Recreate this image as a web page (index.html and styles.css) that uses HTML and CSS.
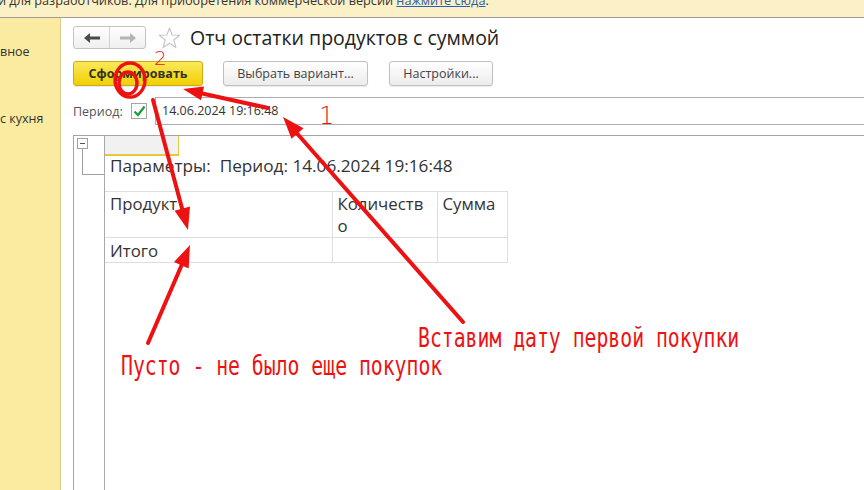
FILE: index.html
```html
<!DOCTYPE html>
<html lang="ru">
<head>
<meta charset="utf-8">
<title>Отч остатки продуктов с суммой</title>
<link rel="stylesheet" href="styles.css">
</head>
<body>
<div class="banner"><span class="banner-text">и для разработчиков. Для приобретения коммерческой версии <a href="#" class="banner-link">нажмите сюда</a>.</span></div>
<div class="app">
  <aside class="sidebar">
    <div class="side-item side-item-1">вное</div>
    <div class="side-item side-item-2">с кухня</div>
  </aside>
  <main class="main">
    <div class="head-row">
      <div class="nav">
        <button class="nav-btn nav-back"><svg width="16" height="10" viewBox="0 0 16 10"><path d="M0 5 L6 0 L6 3.5 L16 3.5 L16 6.5 L6 6.5 L6 10 Z" fill="#4a4a4a"/></svg></button>
        <button class="nav-btn nav-fwd"><svg width="16" height="10" viewBox="0 0 16 10"><path d="M16 5 L10 0 L10 3.5 L0 3.5 L0 6.5 L10 6.5 L10 10 Z" fill="#b4b4b4"/></svg></button>
      </div>
      <svg class="star" width="23" height="22" viewBox="0 0 23 22"><path d="M11.5 1 L14.2 8 L21.7 8.3 L15.8 13 L17.9 20.5 L11.5 16.3 L5.1 20.5 L7.2 13 L1.3 8.3 L8.8 8 Z" fill="none" stroke="#c4c4c4" stroke-width="1.1" stroke-linejoin="round"/></svg>
      <h1 class="title">Отч остатки продуктов с суммой</h1>
    </div>
    <div class="btn-row">
      <button class="btn btn-primary">Сформировать</button>
      <button class="btn">Выбрать вариант...</button>
      <button class="btn">Настройки...</button>
    </div>
    <div class="period-row">
      <span class="period-label">Период:</span>
      <span class="checkbox"><svg width="13" height="12" viewBox="0 0 13 12"><path d="M1.5 6.5 L5 10 L11.5 1.5" fill="none" stroke="#1f9a3c" stroke-width="2.2"/></svg></span>
      <div class="input">14.06.2024 19:16:48</div>
    </div>
    <div class="sheet">
      <div class="gutter">
        <div class="tree-box"></div>
        <div class="tree-line"></div>
      </div>
      <div class="sheet-body">
        <div class="cur-cell"></div>
        <div class="params">Параметры:&nbsp; Период: 14.06.2024 19:16:48</div>
        <table class="report">
          <colgroup><col class="c1"><col class="c2"><col class="c3"></colgroup>
          <tr class="hdr"><td>Продукт</td><td class="wrap">Количество</td><td>Сумма</td></tr>
          <tr class="row"><td>Итого</td><td></td><td></td></tr>
        </table>
      </div>
    </div>
  </main>
</div>
<div class="overlay">
  <svg class="marks" width="864" height="490" viewBox="0 0 864 490">
    <g stroke="#ee1111" stroke-width="4" stroke-linecap="round" fill="none">
      <line x1="268" y1="108" x2="200" y2="93"/>
      <line x1="463" y1="322" x2="294" y2="130"/>
      <line x1="153" y1="100" x2="183" y2="212"/>
      <line x1="148" y1="343" x2="183" y2="262"/>
      <ellipse cx="130" cy="80" rx="15" ry="17" stroke-width="3.4"/>
      <ellipse cx="128" cy="83" rx="9" ry="11" stroke-width="3.4"/>
    </g>
    <g fill="#ee1111">
      <polygon points="183,89 201,100.2 204,86.6"/>
      <polygon points="283,117 291.5,138.8 303.5,128.2"/>
      <polygon points="188,230 190,206.6 174.6,210.8"/>
      <polygon points="190,245 188.7,268.4 174,262"/>
    </g>
  </svg>
  <span class="note num-2">2</span>
  <span class="note num-1">1</span>
  <span class="note note-a">Вставим дату первой покупки</span>
  <span class="note note-b">Пусто - не было еще покупок</span>
</div>
</body>
</html>
```

FILE: styles.css
```css
* { box-sizing: border-box; }
html, body { margin: 0; padding: 0; }
body {
  width: 864px;
  height: 490px;
  overflow: hidden;
  position: relative;
  background: #fff;
  font-family: "Open Sans", "Noto Sans", sans-serif;
  color: #333;
}
.banner {
  height: 18px;
  background: #fcf0c6;
  border-bottom: 1px solid #9c9c9c;
  overflow: hidden;
  white-space: nowrap;
}
.banner-text {
  display: block;
  font-size: 12.7px;
  line-height: 18px;
  margin-top: -9px;
  margin-left: -2px;
  color: #333;
}
.banner-link { color: #2b5db0; text-decoration: underline; }
.app {
  display: flex;
  height: 472px;
}
.sidebar {
  width: 61px;
  flex: none;
  background: #fbeba0;
  border-right: 1px solid #d9cd8c;
  font-size: 12.5px;
  color: #333;
  padding-top: 25px;
}
.side-item { line-height: 18px; white-space: nowrap; }
.side-item-2 { margin-top: 49px; }
.main {
  flex: 1;
  min-width: 0;
  padding: 8px 0 0 12px;
  overflow: hidden;
}
.head-row {
  display: flex;
  align-items: center;
  height: 23px;
}
.nav {
  display: flex;
  width: 73px;
  height: 23px;
  border: 1px solid #c3c3c3;
  border-radius: 3px;
  background: linear-gradient(#ffffff, #efefef);
  overflow: hidden;
}
.nav-btn {
  flex: 1;
  border: 0;
  background: transparent;
  padding: 0;
  display: flex;
  align-items: center;
  justify-content: center;
}
.nav-back { border-right: 1px solid #d2d2d2; }
.star { margin-left: 12px; }
.title {
  margin: 0 0 0 9px;
  font-size: 19.5px;
  font-weight: normal;
  color: #222;
  white-space: nowrap;
  line-height: 23px;
}
.btn-row {
  display: flex;
  gap: 20px;
  margin-top: 12px;
}
.btn {
  height: 25px;
  padding: 0 13px;
  border: 1px solid #c0c0c0;
  border-radius: 3px;
  background: linear-gradient(#ffffff, #ececec);
  font-family: "Open Sans", "Noto Sans", sans-serif;
  font-size: 12.5px;
  color: #444;
  box-shadow: 0 1px 1px rgba(0,0,0,0.08);
}
.btn:nth-child(2) { width: 145px; }
.btn:nth-child(3) { width: 104px; margin-left: 1px; }
.btn-primary {
  width: 130px;
  background: linear-gradient(#fbe95a, #f0cf05);
  border-color: #c9ac12;
  font-weight: bold;
  color: #333318;
}
.period-row {
  display: flex;
  align-items: center;
  margin-top: 11px;
  height: 28px;
}
.period-label {
  font-size: 12.5px;
  color: #555;
  width: 58px;
}
.checkbox {
  width: 16px;
  height: 16px;
  border: 1px solid #a6a6a6;
  background: #fff;
  display: flex;
  align-items: center;
  justify-content: center;
}
.input {
  flex: 1;
  height: 28px;
  margin-left: 8px;
  margin-right: -10px;
  border: 1px solid #acacac;
  padding-left: 6px;
  font-size: 12.5px;
  line-height: 26px;
  color: #333;
}
.sheet {
  display: flex;
  margin-top: 10px;
  margin-right: -10px;
  height: 360px;
  border-top: 1px solid #a4a4a4;
  border-left: 1px solid #a4a4a4;
}
.gutter {
  width: 31px;
  flex: none;
  border-right: 1px solid #a9a9a9;
  padding-top: 2px;
}
.tree-box {
  width: 11px;
  height: 11px;
  margin-left: 3px;
  border: 1px solid #a0a0a0;
  position: relative;
}
.tree-box::after {
  content: "";
  position: absolute;
  left: 2px;
  right: 2px;
  top: 4px;
  height: 1px;
  background: #555;
}
.tree-line {
  width: 22px;
  height: 26px;
  margin-left: 8px;
  border-left: 1px solid #a0a0a0;
  border-bottom: 1px solid #a0a0a0;
}
.sheet-body { flex: 1; }
.cur-cell {
  width: 74px;
  height: 20px;
  background: #f1f1f1;
  border-right: 1px solid #e6c83a;
  border-bottom: 2px solid #e6c83a;
}
.params {
  font-size: 17.2px;
  line-height: 24px;
  padding-left: 5px;
  color: #333;
  white-space: nowrap;
  margin-bottom: 13px;
  margin-top: -2px;
}
.report {
  border-collapse: collapse;
  width: 402px;
  table-layout: fixed;
  font-size: 16.8px;
  color: #333;
}
.c1 { width: 227px; }
.c2 { width: 105px; }
.c3 { width: 70px; }
.report td {
  border: 1px solid #dedede;
  padding: 0 5px 0;
  line-height: 22px;
  vertical-align: top;
  text-align: left;
}
.report tr td:first-child { border-left: 0; }
.report .wrap { word-break: break-all; }
.hdr td { height: 46px; padding-top: 1px; }
.row td { height: 24px; padding-top: 2px; }
.overlay {
  position: absolute;
  left: 0;
  top: 0;
  width: 864px;
  height: 490px;
  pointer-events: none;
}
.marks { position: absolute; left: 0; top: 0; }
.note {
  position: absolute;
  color: #ee1111;
  white-space: nowrap;
  font-family: "DejaVu Sans Mono", monospace;
  line-height: 1;
}
.num-2 { left: 154px; top: 48px; font-family: "DejaVu Sans", sans-serif; font-size: 20px; font-weight: 300; }
.num-1 { left: 319px; top: 104px; font-family: "DejaVu Sans", sans-serif; font-size: 24px; font-weight: 200; }
.note-a, .note-b {
  font-size: 26px;
  transform: scaleX(0.76);
  transform-origin: 0 0;
}
.note-a { left: 418px; top: 325px; }
.note-b { left: 121px; top: 353px; }
```
